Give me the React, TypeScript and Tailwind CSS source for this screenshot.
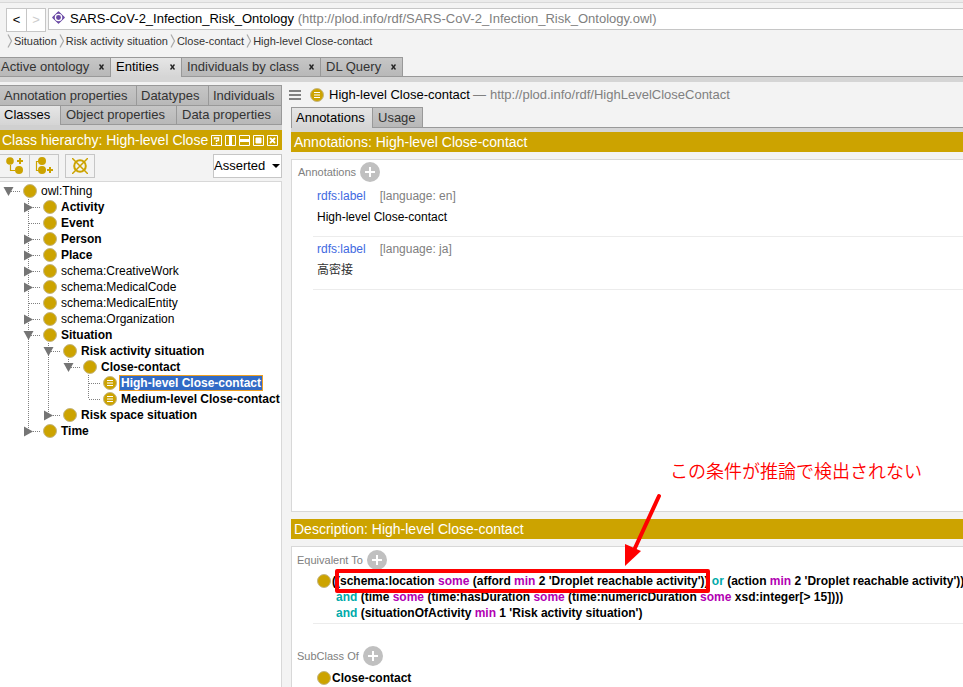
import React from "react";

type TreeRow = {
  label: string;
  level: number;
  lines: number[];
  state?: "open" | "closed";
  more?: boolean;
  bold?: boolean;
  defined?: boolean;
  selected?: boolean;
};

const rows: TreeRow[] = [
  { label: "owl:Thing", level: 0, lines: [], state: "open" },
  { label: "Activity", level: 1, lines: [], state: "closed", more: true, bold: true },
  { label: "Event", level: 1, lines: [], more: true, bold: true },
  { label: "Person", level: 1, lines: [], state: "closed", more: true, bold: true },
  { label: "Place", level: 1, lines: [], state: "closed", more: true, bold: true },
  { label: "schema:CreativeWork", level: 1, lines: [], state: "closed", more: true },
  { label: "schema:MedicalCode", level: 1, lines: [], state: "closed", more: true },
  { label: "schema:MedicalEntity", level: 1, lines: [], more: true },
  { label: "schema:Organization", level: 1, lines: [], state: "closed", more: true },
  { label: "Situation", level: 1, lines: [], state: "open", more: true, bold: true },
  { label: "Risk activity situation", level: 2, lines: [1], state: "open", more: true, bold: true },
  { label: "Close-contact", level: 3, lines: [1, 2], state: "open", bold: true },
  { label: "High-level Close-contact", level: 4, lines: [1, 2], more: true, bold: true, defined: true, selected: true },
  { label: "Medium-level Close-contact", level: 4, lines: [1, 2], bold: true, defined: true },
  { label: "Risk space situation", level: 2, lines: [1], state: "closed", bold: true },
  { label: "Time", level: 1, lines: [], state: "closed", bold: true },
];

function ClassDot({ defined = false }: { defined?: boolean }) {
  return (
    <svg width="14" height="14" viewBox="0 0 14 14" className="shrink-0" aria-hidden="true">
      <circle cx="7" cy="7" r="6.5" fill="#cca300" stroke="#c4b684" strokeWidth="1" />
      {defined && <path d="M4 4.500h6M4 7h6M4 9.500h6" stroke="#fff" strokeWidth="1.200" />}
    </svg>
  );
}

function Handle({ row }: { row: TreeRow }) {
  return (
    <svg width="20" height="16" viewBox="0 0 20 16" className="shrink-0" aria-hidden="true">
      {row.level > 0 && (
        <path d={row.more ? "M8.5 0V16" : "M8.5 0V8"} stroke="#808080" strokeDasharray="1 1" />
      )}
      <path d="M9 8.5H20" stroke="#808080" strokeDasharray="1 1" />
      {row.state === "open" && <path d="M3.5 4h10L8.5 13z" fill="#757575" />}
      {row.state === "closed" && <path d="M4 3.5v10l9-5z" fill="#757575" />}
    </svg>
  );
}

function Guide({ on }: { on: boolean }) {
  return (
    <svg width="20" height="16" viewBox="0 0 20 16" className="shrink-0" aria-hidden="true">
      {on && <path d="M8.5 0V16" stroke="#808080" strokeDasharray="1 1" />}
    </svg>
  );
}

function Tab({ label, active = false, close = false, className = "" }: { label: string; active?: boolean; close?: boolean; className?: string }) {
  return (
    <button
      type="button"
      role="tab"
      aria-selected={active}
      className={
        "flex h-5 items-center border-t border-r border-[#999] text-[13px] whitespace-nowrap " +
        (active ? "bg-linear-to-b from-[#e6e6e6] to-[#d5d5d5] pb-px text-black " : "border-b bg-linear-to-b from-[#c6c6c6] to-[#b8b8b8] text-[#333] ") +
        className
      }
    >
      {label}
      {close && (
        <svg width="5" height="6" viewBox="0 0 5 6" className="mr-[6px] ml-auto" aria-hidden="true">
          <path d="M.5.5l4 5M4.500.5l-4 5" stroke="#222" strokeWidth="1.400" />
        </svg>
      )}
    </button>
  );
}

function AddButton({ label }: { label: string }) {
  return (
    <button type="button" aria-label={label} className="size-5">
      <svg width="20" height="20" viewBox="0 0 20 20" aria-hidden="true">
        <circle cx="10" cy="10" r="10" fill="#c0c0c0" />
        <path d="M10 5v10M5 10h10" stroke="#fff" strokeWidth="2" />
      </svg>
    </button>
  );
}

function Chevron() {
  return (
    <svg width="6" height="14" viewBox="0 0 6 14" className="shrink-0" aria-hidden="true">
      <path d="M1 .5l3.500 6.500L1 13.500" fill="none" stroke="#aaa" strokeWidth="1.200" />
    </svg>
  );
}

function ViewIcon({ name, children }: { name: string; children: React.ReactNode }) {
  return (
    <button type="button" aria-label={name} className="size-[11px]">
      <svg width="11" height="11" viewBox="0 0 11 11" fill="none" stroke="#fff" aria-hidden="true">
        <path d="M.5.5h10v10H.5z" />
        {children}
      </svg>
    </button>
  );
}

const Some = ({ children }: { children: string }) => <span className="text-[#b200b2]">{children}</span>;
const And = ({ children }: { children: string }) => <span className="text-[#00aaaa]">{children}</span>;

function Annotation({ lang, value, dim = false }: { lang: string; value: string; dim?: boolean }) {
  return (
    <div className="ml-[21px] h-[53px] border-b border-[#ececec] pt-[2px] pl-1 text-[12px]">
      <div className="flex h-5 items-center gap-[14px]">
        <a href="#label" className="text-[#4169e1]">rdfs:label</a>
        <span className="text-[#808080]">[language: {lang}]</span>
      </div>
      <div className={"flex h-[22px] items-center " + (dim ? "text-[#333]" : "text-black")}>{value}</div>
    </div>
  );
}

export default function App() {
  return (
    <div className="flex h-screen min-h-[620px] flex-col overflow-hidden bg-[#f3f3f3] font-['Liberation_Sans','Noto_Sans_CJK_JP',sans-serif] text-[12px] leading-4 text-black">
      <header className="shrink-0">
        <div className="h-[3px] border-b border-[#d8d8d8] bg-[#ebebeb]" />
        <div className="flex pt-[5px] pl-[6px]">
          <button type="button" aria-label="Back" className="h-6 w-[21px] border border-[#c6c6c6] bg-white text-[13px]">&lt;</button>
          <button type="button" aria-label="Forward" className="h-6 w-[19px] border border-l-0 border-[#c6c6c6] bg-white text-[13px] text-[#ccc]">&gt;</button>
          <div className="ml-[2px] flex h-[22px] min-w-0 flex-1 items-center border-y border-l border-[#c6c6c6] bg-white pl-[3px] text-[13px] whitespace-nowrap">
            <svg width="13" height="13" viewBox="0 0 13 13" className="mr-[5px] mb-1 shrink-0" aria-hidden="true">
              <path d="M6.500 .8L12.200 6.500 6.500 12.200 .8 6.500z" fill="#6b4aa5" stroke="#6b4aa5" strokeWidth="1.200" strokeLinejoin="round" />
              <circle cx="6.500" cy="6.500" r="3.100" fill="none" stroke="#fff" strokeWidth="1.300" />
            </svg>
            <span>SARS-CoV-2_Infection_Risk_Ontology <span className="text-[#808080]">(http://plod.info/rdf/SARS-CoV-2_Infection_Risk_Ontology.owl)</span></span>
          </div>
        </div>
        <nav aria-label="Breadcrumb" className="flex h-[25px] items-start gap-px pt-px pl-[7px] text-[11px] whitespace-nowrap text-[#333]">
          {["Situation", "Risk activity situation", "Close-contact", "High-level Close-contact"].map((t) => (
            <span key={t} className="flex items-center gap-px pr-px">
              <Chevron />
              {t}
            </span>
          ))}
        </nav>
        <div role="tablist" className="flex">
          <Tab label="Active ontology" close className="w-[111px] pl-px" />
          <Tab label="Entities" close active className="w-[71px] pl-[5px]" />
          <Tab label="Individuals by class" close className="w-[139px] pl-[5px]" />
          <Tab label="DL Query" close className="w-[82px] pl-[5px]" />
          <div className="flex-1 border-b border-[#999]" />
        </div>
        <div className="h-[5px] bg-[#d5d5d5]" />
      </header>

      <div className="flex min-h-0 flex-1 gap-[9px]">
        <aside className="flex w-[282px] shrink-0 flex-col pt-[3px]">
          <div role="tablist">
            <div className="flex">
              <Tab label="Annotation properties" className="w-[137px] border-b-0 pl-1" />
              <Tab label="Datatypes" className="w-[72px] border-b-0 pl-1" />
              <Tab label="Individuals" className="flex-1 border-b-0 pl-1" />
            </div>
            <div className="flex">
              <Tab label="Classes" active className="w-[61px] pl-1" />
              <Tab label="Object properties" className="w-[116px] pl-[5px]" />
              <Tab label="Data properties" className="flex-1 pl-[5px]" />
            </div>
            <div className="h-[5px] bg-[#d0d0d0]" />
          </div>
          <div className="flex h-5 shrink-0 items-center gap-[3px] bg-[#cca300] pr-1 pl-[2px] text-white">
            <h2 className="flex-1 text-[14px] whitespace-nowrap">Class hierarchy: High-level Close</h2>
            <ViewIcon name="Help"><path d="M3.500 4.500V3h4v2.500h-2V7M5.500 8v1.500" strokeWidth="1.400" /></ViewIcon>
            <ViewIcon name="Split vertically"><path d="M5.500 0v11" strokeWidth="3" /></ViewIcon>
            <ViewIcon name="Split horizontally"><path d="M0 5.500h11" strokeWidth="3" /></ViewIcon>
            <ViewIcon name="Float"><path d="M3 3h5v5H3z" fill="#fff" /></ViewIcon>
            <ViewIcon name="Close"><path d="M3 3l5 5M8 3l-5 5" strokeWidth="1.800" /></ViewIcon>
          </div>
          <div className="flex h-[31px] shrink-0 items-start pt-1">
            <button type="button" aria-label="Add subclass" className="flex h-6 w-[30px] items-center justify-center border border-l-0 border-[#c6c6c6]">
              <svg width="18" height="18" viewBox="0 0 18 18" fill="none" stroke="#cca300" aria-hidden="true">
                <circle cx="4" cy="4" r="3.800" fill="#cca300" stroke="none" />
                <circle cx="13" cy="13" r="4" fill="#cca300" stroke="none" />
                <path d="M4.500 8v5.500H9" strokeWidth="1.200" />
                <path d="M14 1v6M11 4h6" strokeWidth="2" />
              </svg>
            </button>
            <button type="button" aria-label="Add sibling class" className="flex h-6 w-[29px] items-center justify-center border border-l-0 border-[#c6c6c6]">
              <svg width="18" height="18" viewBox="0 0 18 18" fill="none" stroke="#cca300" aria-hidden="true">
                <circle cx="7" cy="4" r="4" fill="#cca300" stroke="none" />
                <circle cx="7" cy="13" r="4" fill="#cca300" stroke="none" />
                <path d="M4 4.500H1.500v9H4" strokeWidth="1.200" />
                <path d="M15 10v6M12 13h6" strokeWidth="2" />
              </svg>
            </button>
            <button type="button" aria-label="Delete class" className="ml-[6px] flex h-6 w-[30px] items-center justify-center border border-[#c6c6c6]">
              <svg width="16" height="16" viewBox="0 0 16 16" fill="none" stroke="#cca300" aria-hidden="true">
                <circle cx="8" cy="8" r="5.800" strokeWidth="2" />
                <path d="M0 0l16 16M16 0L0 16" strokeWidth="1.500" />
              </svg>
            </button>
            <div className="relative ml-auto h-6 w-[69px]">
              <select aria-label="Hierarchy" className="h-6 w-full appearance-none border border-[#c6c6c6] bg-white text-[13px]">
                <option>Asserted</option>
                <option>Inferred</option>
              </select>
              <svg width="8" height="4" viewBox="0 0 8 4" className="pointer-events-none absolute top-[10px] right-[2px]" aria-hidden="true">
                <path d="M0 0h8L4 4z" fill="#000" />
              </svg>
            </div>
          </div>
          <ul role="tree" className="min-h-0 flex-1 overflow-hidden border-t border-r border-[#d8d8d8] bg-white pt-px">
            {rows.map((row) => (
              <li key={row.label} role="treeitem" aria-selected={!!row.selected} className="flex h-4 items-center whitespace-nowrap">
                {Array.from({ length: row.level }, (_, i) => <Guide key={i} on={row.lines.includes(i)} />)}
                <Handle row={row} />
                <span className="flex items-center gap-[3px] pl-[3px]">
                  <ClassDot defined={row.defined} />
                  <span
                    className={
                      "px-px leading-[14px] " +
                      (row.bold ? "font-bold " : "") +
                      (row.selected ? "bg-[#316ac5] text-white outline outline-[#f0a020]" : "")
                    }
                  >
                    {row.label}
                  </span>
                </span>
              </li>
            ))}
          </ul>
        </aside>

        <main className="flex min-w-0 flex-1 flex-col">
          <div className="flex h-[25px] shrink-0 items-center text-[13px] whitespace-nowrap">
            <button type="button" aria-label="Menu" className="-ml-[2px] h-3 w-3">
              <svg width="12" height="12" viewBox="0 0 12 12" aria-hidden="true">
                <path d="M0 2h12M0 6h12M0 10h12" stroke="#808080" strokeWidth="2" />
              </svg>
            </button>
            <span className="mr-[5px] ml-[9px]"><ClassDot defined /></span>
            <h1>High-level Close-contact</h1>
            <span className="flex gap-1 pl-[3px] text-[#808080]"><span>—</span><span>http://plod.info/rdf/HighLevelCloseContact</span></span>
          </div>
          <div role="tablist" className="flex shrink-0">
            <Tab label="Annotations" active className="h-[21px] w-[82px] border-l pl-1" />
            <Tab label="Usage" className="h-[21px] w-[50px] pl-[5px]" />
            <div className="flex-1 border-b border-[#999]" />
          </div>
          <div className="h-1 shrink-0 bg-[#d5d5d5]" />
          <h2 className="flex h-5 shrink-0 items-center bg-[#cca300] pl-[3px] text-[14px] text-white">Annotations: High-level Close-contact</h2>
          <section className="my-[7px] min-h-0 flex-1 overflow-hidden border-y border-l border-[#d8d8d8] bg-white">
            <div className="flex h-6 items-center gap-1 pl-[6px] text-[11px] text-[#808080]">
              <span>Annotations</span>
              <AddButton label="Add annotation" />
            </div>
            <Annotation lang="en" value="High-level Close-contact" />
            <Annotation lang="ja" value="高密接" dim />
          </section>
          <h2 className="flex h-5 shrink-0 items-center bg-[#cca300] pl-[3px] text-[14px] text-white">Description: High-level Close-contact</h2>
          <section className="relative mt-[7px] h-[141px] shrink-0 border-t border-l border-[#d8d8d8] bg-white">
            <div className="flex h-[26px] items-center gap-1 pl-[5px] text-[11px] text-[#808080]">
              <span>Equivalent To</span>
              <AddButton label="Add equivalent class" />
            </div>
            <div className="ml-[21px] flex h-[51px] items-start gap-px border-b border-[#ececec] pl-1 font-bold whitespace-nowrap">
              <span className="pt-px"><ClassDot /></span>
              <div>
                <div>((schema:location <Some>some</Some> (afford <Some>min</Some> 2 'Droplet reachable activity')) <And>or</And> (action <Some>min</Some> 2 'Droplet reachable activity'))</div>
                <div className="pl-1"><And>and</And> (time <Some>some</Some> (time:hasDuration <Some>some</Some> (time:numericDuration <Some>some</Some> xsd:integer[&gt; 15])))</div>
                <div className="pl-1"><And>and</And> (situationOfActivity <Some>min</Some> 1 'Risk activity situation')</div>
              </div>
            </div>
            <div className="mt-5 flex h-6 items-center gap-1 pl-[5px] text-[11px] text-[#808080]">
              <span>SubClass Of</span>
              <AddButton label="Add superclass" />
            </div>
            <div className="ml-[21px] flex h-5 items-center gap-px pl-1 font-bold">
              <ClassDot />
              Close-contact
            </div>
            <div className="pointer-events-none absolute top-[22px] left-[43px] h-6 w-[375px] rounded-xs border-4 border-[#ff0000]" />
            <svg width="40" height="76" viewBox="0 0 40 76" className="pointer-events-none absolute -top-[54px] left-[331px]" aria-hidden="true">
              <path d="M36 3L12 55" stroke="#ff0000" strokeWidth="4" strokeLinecap="round" />
              <path d="M2 51l16 7L2 73z" fill="#ff0000" />
            </svg>
            <p className="absolute -top-[91px] left-[378px] font-['Noto_Sans_CJK_JP',sans-serif] text-[18px] leading-7 font-[350] whitespace-nowrap text-[#ff0000]">この条件が推論で検出されない</p>
          </section>
        </main>
      </div>
    </div>
  );
}
